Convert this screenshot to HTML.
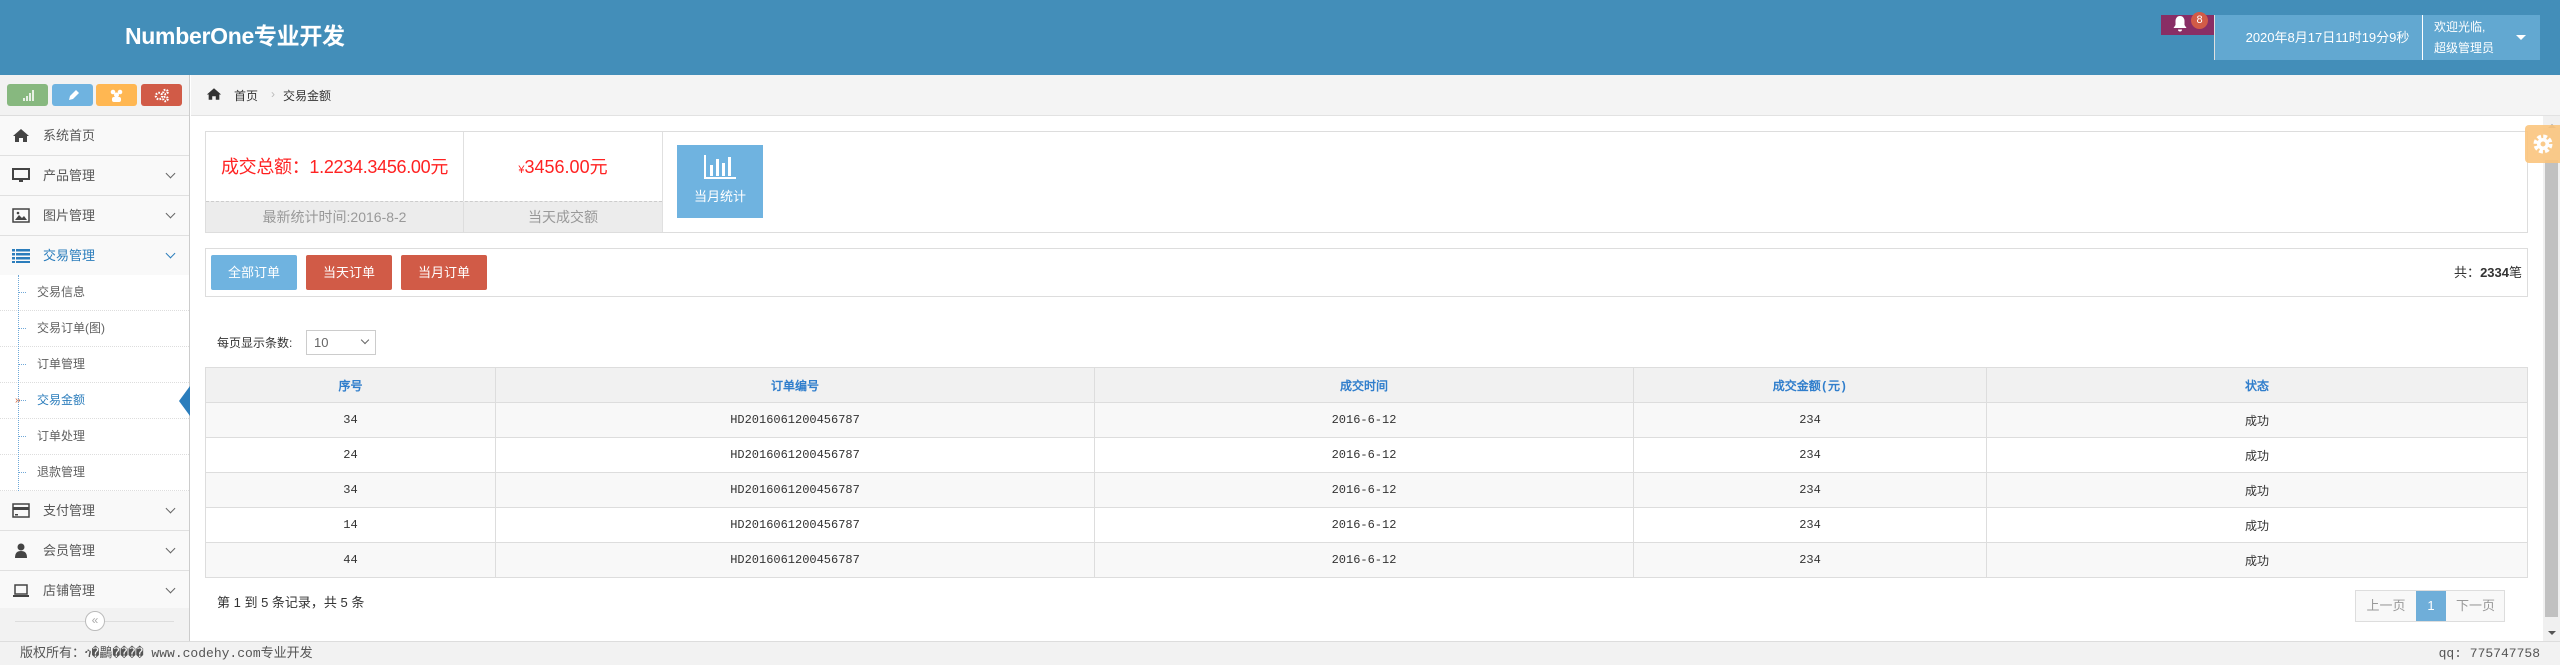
<!DOCTYPE html>
<html><head><meta charset="utf-8"><style>
*{margin:0;padding:0;box-sizing:border-box}
body{width:2560px;height:665px;overflow:hidden;background:#fff;font-family:"Liberation Sans","Noto Sans CJK SC",sans-serif;font-size:12px;color:#393939;position:relative}
.abs{position:absolute}
#hdr{left:0;top:0;width:2560px;height:75px;background:#438eb9}
#title{left:125px;top:17px;color:#fff;font-size:23px;font-weight:bold;letter-spacing:-0.3px}
#side{left:0;top:75px;width:190px;height:566px;background:#f2f2f2;border-right:1px solid #ccc}
.sc{top:9px;height:22px;width:41px;border-radius:3px}
.nav{left:0;width:189px;height:40px;border-bottom:1px solid #e0e0e0;background:#f9f9f9;font-size:13px;line-height:39px;padding-left:43px;color:#585858}
.nav .ic{position:absolute;left:12px;top:12px;width:18px;height:15px}
.nav .chev{position:absolute;left:167px;top:14px;width:7px;height:7px;border-right:1.5px solid #666;border-bottom:1.5px solid #666;transform:rotate(45deg)}
.sub{left:0;width:189px;height:36px;background:#fff;border-bottom:1px dotted #ddd;font-size:12px;line-height:35px;padding-left:37px;color:#616161}
.sub:before{content:"";position:absolute;left:19px;top:17px;width:7px;border-top:1px dotted #6fa8d8}
#bc{left:191px;top:75px;width:2369px;height:41px;background:#f4f4f4;border-bottom:1px solid #e2e2e2;font-size:12px;color:#333}
.box{border:1px solid #ddd;background:#fff}
table{border-collapse:collapse;position:absolute;left:205px;top:367px;width:2323px;font-family:"WenQuanYi Zen Hei","Liberation Mono",monospace;font-size:12px}
td,th{border:1px solid #ddd;height:35px;text-align:center;color:#333;font-weight:normal}
th{background:#f1f1f1;color:#307ecc;font-weight:bold}
tr:nth-child(even) td{background:#f8f8f8}
.btn{height:35px;top:255px;width:86px;color:#fff;font-size:13px;line-height:35px;text-align:center;border-radius:2px}
</style></head><body>
<div id="hdr" class="abs"></div>
<div id="title" class="abs">NumberOne专业开发</div>
<div class="abs" style="left:2161px;top:15px;width:53px;height:20px;background:#892e65"></div>
<svg class="abs" style="left:2172px;top:15px" width="16" height="18" viewBox="0 0 16 18"><path d="M8 1c-3 0-4.5 2.5-4.5 5v4L1.5 13h13L12.5 10V6C12.5 3.5 11 1 8 1zM6 14.5a2 2 0 0 0 4 0z" fill="#fff"/></svg>
<div class="abs" style="left:2191px;top:12px;width:17px;height:17px;border-radius:50%;background:#d15b47;color:#fff;font-size:11px;text-align:center;line-height:17px">8</div>
<div class="abs" style="left:2214px;top:15px;width:208px;height:45px;background:#62a8d1;border-left:1px solid #e0e0e0;color:#fff;font-size:13px;line-height:45px;text-align:center;padding-left:18px">2020年8月17日11时19分9秒</div>
<div class="abs" style="left:2422px;top:15px;width:118px;height:45px;background:#62a8d1;border-left:1px solid #fff;color:#fff;font-size:12px;line-height:21px;padding:2px 0 0 11px">欢迎光临,<br>超级管理员</div>
<div class="abs" style="left:2516px;top:35px;border-left:5px solid transparent;border-right:5px solid transparent;border-top:5px solid #fff"></div>

<div id="side" class="abs">
<div class="abs sc" style="left:7px;background:#87b87f"><svg width="41" height="22"><g fill="#fff" opacity=".8"><rect x="16" y="14" width="2" height="3"/><rect x="19" y="12" width="2" height="5"/><rect x="22" y="9" width="2" height="8"/><rect x="25" y="6" width="2" height="11"/></g></svg></div>
<div class="abs sc" style="left:52px;background:#6fb3e0"><svg width="41" height="22"><path d="M17 16l1-4 6-6 3 3-6 6z" fill="#fff"/></svg></div>
<div class="abs sc" style="left:96px;background:#ffb752"><svg width="41" height="22"><g fill="#fff"><circle cx="17" cy="8" r="2.3"/><circle cx="24" cy="8" r="2.3"/><circle cx="20.5" cy="11" r="2.5"/><rect x="16" y="13" width="9" height="5" rx="2"/></g></svg></div>
<div class="abs sc" style="left:141px;background:#d15b47"><svg width="41" height="22"><g fill="none" stroke="#fff" stroke-width="2.2" stroke-dasharray="1.6 1.2"><circle cx="18" cy="12" r="3.2"/><circle cx="24.5" cy="8" r="2.2"/><circle cx="24.5" cy="15" r="2.2"/></g></svg></div>
<div class="abs" style="left:0;top:40px;width:189px;border-top:1px solid #ddd"></div>
</div>
<div class="abs nav" style="top:116px"><svg class="ic" viewBox="0 0 18 15"><path d="M9 1L1 8h2v6h4v-4h4v4h4V8h2z" fill="#444"/></svg>系统首页</div>
<div class="abs nav" style="top:156px"><svg class="ic" viewBox="0 0 18 15"><rect x="1" y="1" width="16" height="10" fill="none" stroke="#444" stroke-width="2"/><rect x="7" y="11" width="4" height="3" fill="#444"/></svg>产品管理<span class="chev"></span></div>
<div class="abs nav" style="top:196px"><svg class="ic" viewBox="0 0 18 15"><rect x="1" y="1" width="16" height="13" fill="none" stroke="#444" stroke-width="1.5"/><path d="M3 12l4-5 3 3 2-2 3 4z" fill="#444"/><circle cx="6" cy="5" r="1.3" fill="#444"/></svg>图片管理<span class="chev"></span></div>
<div class="abs nav" style="top:236px;color:#2b7dbc"><svg class="ic" viewBox="0 0 18 15"><g fill="#2b7dbc"><rect x="0" y="1" width="3" height="2.5"/><rect x="4" y="1" width="14" height="2.5"/><rect x="0" y="5" width="3" height="2.5"/><rect x="4" y="5" width="14" height="2.5"/><rect x="0" y="9" width="3" height="2.5"/><rect x="4" y="9" width="14" height="2.5"/><rect x="0" y="13" width="3" height="2"/><rect x="4" y="13" width="14" height="2"/></g></svg>交易管理<span class="chev" style="border-color:#2b7dbc"></span></div>
<div class="abs" style="left:18px;top:275px;height:216px;border-left:1px dotted #6fa8d8;z-index:2"></div>
<div class="abs sub" style="top:275px">交易信息</div>
<div class="abs sub" style="top:311px">交易订单(图)</div>
<div class="abs sub" style="top:347px">订单管理</div>
<div class="abs sub" style="top:383px;color:#2b7dbc"><span class="abs" style="left:15px;top:0;color:#c86139;font-size:10px">»</span>交易金额</div>
<div class="abs" style="left:179px;top:386px;border-right:11px solid #2b7dbc;border-top:15px solid transparent;border-bottom:15px solid transparent"></div>
<div class="abs sub" style="top:419px">订单处理</div>
<div class="abs sub" style="top:455px">退款管理</div>
<div class="abs nav" style="top:491px"><svg class="ic" viewBox="0 0 18 15"><rect x="1" y="1" width="16" height="13" fill="none" stroke="#444" stroke-width="1.5"/><rect x="1" y="4" width="16" height="3" fill="#444"/><rect x="3" y="11" width="3" height="1.5" fill="#444"/></svg>支付管理<span class="chev"></span></div>
<div class="abs nav" style="top:531px"><svg class="ic" viewBox="0 0 18 15"><circle cx="9" cy="4" r="3.5" fill="#444"/><path d="M3 15c0-5 2-7 6-7s6 2 6 7z" fill="#444"/></svg>会员管理<span class="chev"></span></div>
<div class="abs nav" style="top:571px;height:37px;border-bottom:none"><svg class="ic" viewBox="0 0 18 15"><rect x="3" y="2" width="12" height="9" fill="none" stroke="#444" stroke-width="1.5"/><rect x="1" y="12" width="16" height="2" fill="#444"/></svg>店铺管理<span class="chev"></span></div>
<div class="abs" style="left:15px;top:621px;width:159px;border-top:1px solid #ddd"></div>
<div class="abs" style="left:85px;top:611px;width:20px;height:20px;border-radius:50%;border:1px solid #bbb;background:#fff;color:#aaa;font-size:12px;text-align:center;line-height:17px">«</div>

<div id="bc" class="abs"><svg class="abs" style="left:15px;top:12px" width="16" height="14" viewBox="0 0 18 15"><path d="M9 1L1 8h2v6h4v-4h4v4h4V8h2z" fill="#333"/></svg><span class="abs" style="left:43px;top:12px">首页</span><span class="abs" style="left:80px;top:12px;color:#bbb">›</span><span class="abs" style="left:92px;top:12px">交易金额</span></div>

<div class="abs box" style="left:205px;top:131px;width:2323px;height:102px"></div>
<div class="abs" style="left:206px;top:132px;width:257px;height:70px;color:#f22;font-size:18px;text-align:center;line-height:70px;letter-spacing:-0.3px">成交总额：1.2234.3456.00元</div>
<div class="abs" style="left:463px;top:132px;width:200px;height:100px;border-left:1px solid #e0e0e0;border-right:1px solid #e0e0e0"></div>
<div class="abs" style="left:464px;top:132px;width:198px;height:70px;color:#f22;font-size:18px;text-align:center;line-height:70px"><span style="font-size:11px">¥</span>3456.00元</div>
<div class="abs" style="left:206px;top:201px;width:456px;height:31px;background:#ececec;border-top:1px dashed #ccc"></div>
<div class="abs" style="left:206px;top:202px;width:257px;height:30px;color:#999;font-size:14px;text-align:center;line-height:30px">最新统计时间:2016-8-2</div>
<div class="abs" style="left:463px;top:202px;width:1px;height:30px;background:#ddd"></div>
<div class="abs" style="left:464px;top:202px;width:198px;height:30px;color:#999;font-size:14px;text-align:center;line-height:30px">当天成交额</div>
<div class="abs" style="left:677px;top:145px;width:86px;height:73px;background:#6fb3e0;color:#fff;font-size:13px;text-align:center"><svg style="margin-top:8px" width="34" height="28" viewBox="0 0 34 28"><g fill="#fff"><rect x="1" y="2" width="2" height="24"/><rect x="1" y="24" width="32" height="2"/><rect x="7" y="12" width="3" height="11"/><rect x="13" y="6" width="3" height="17"/><rect x="19" y="10" width="3" height="13"/><rect x="25" y="4" width="3" height="19"/></g></svg><div style="margin-top:2px">当月统计</div></div>

<div class="abs box" style="left:205px;top:248px;width:2323px;height:49px"></div>
<div class="abs btn" style="left:211px;background:#6fb3e0">全部订单</div>
<div class="abs btn" style="left:306px;background:#d15b47">当天订单</div>
<div class="abs btn" style="left:401px;background:#d15b47">当月订单</div>
<div class="abs" style="left:2400px;top:262px;width:122px;text-align:right;font-size:13px;color:#333">共：<b>2334</b>笔</div>

<div class="abs" style="left:217px;top:334px;font-size:12px;color:#333">每页显示条数:</div>
<div class="abs" style="left:306px;top:330px;width:70px;height:25px;border:1px solid #ccc;font-size:13px;color:#666;line-height:23px;padding-left:7px">10<span class="abs" style="left:55px;top:6px;width:6px;height:6px;border-right:1.5px solid #666;border-bottom:1.5px solid #666;transform:rotate(45deg)"></span></div>

<table>
<tr><th style="width:290px">序号</th><th style="width:599px">订单编号</th><th style="width:539px">成交时间</th><th style="width:353px">成交金额(元)</th><th>状态</th></tr>
<tr><td>34</td><td>HD2016061200456787</td><td>2016-6-12</td><td>234</td><td>成功</td></tr>
<tr><td>24</td><td>HD2016061200456787</td><td>2016-6-12</td><td>234</td><td>成功</td></tr>
<tr><td>34</td><td>HD2016061200456787</td><td>2016-6-12</td><td>234</td><td>成功</td></tr>
<tr><td>14</td><td>HD2016061200456787</td><td>2016-6-12</td><td>234</td><td>成功</td></tr>
<tr><td>44</td><td>HD2016061200456787</td><td>2016-6-12</td><td>234</td><td>成功</td></tr>
</table>
<div class="abs" style="left:217px;top:592px;font-size:13px;color:#333">第 1 到 5 条记录，共 5 条</div>
<div class="abs" style="left:2355px;top:590px;width:150px;height:32px;border:1px solid #ddd;background:#f8f8f8;font-size:13px;color:#999;line-height:30px">
<span class="abs" style="left:0;width:60px;text-align:center">上一页</span>
<span class="abs" style="left:60px;width:30px;height:30px;background:#6faed9;color:#fff;text-align:center">1</span>
<span class="abs" style="left:90px;width:59px;text-align:center">下一页</span></div>

<div class="abs" style="left:2543px;top:116px;width:17px;height:525px;background:#f0f0f0"></div>
<div class="abs" style="left:2545px;top:160px;width:13px;height:457px;background:#c1c1c1"></div>
<div class="abs" style="left:2548px;top:124px;border-left:4px solid transparent;border-right:4px solid transparent;border-bottom:4px solid #999"></div>
<div class="abs" style="left:2548px;top:631px;border-left:4px solid transparent;border-right:4px solid transparent;border-top:4px solid #555"></div>
<div class="abs" style="left:2525px;top:125px;width:35px;height:38px;background:#fbc57e;border-radius:4px 0 0 4px;opacity:.9"><svg style="margin:7px 0 0 6px" width="24" height="24" viewBox="0 0 24 24"><circle cx="12" cy="12" r="7" fill="none" stroke="#fff" stroke-width="5" stroke-dasharray="3.5 2"/><circle cx="12" cy="12" r="6" fill="#fff"/><circle cx="12" cy="12" r="2.5" fill="#fbc57e"/></svg></div>

<div class="abs" style="left:0;top:641px;width:2560px;height:24px;background:#f2f2f2;border-top:1px solid #ddd;font-family:'Liberation Mono','WenQuanYi Zen Hei',monospace;font-size:13px;color:#555;line-height:23px"><span class="abs" style="left:20px">版权所有：ጎ�鸓���� www.codehy.com专业开发</span><span class="abs" style="right:20px">qq: 775747758</span></div>
</body></html>
